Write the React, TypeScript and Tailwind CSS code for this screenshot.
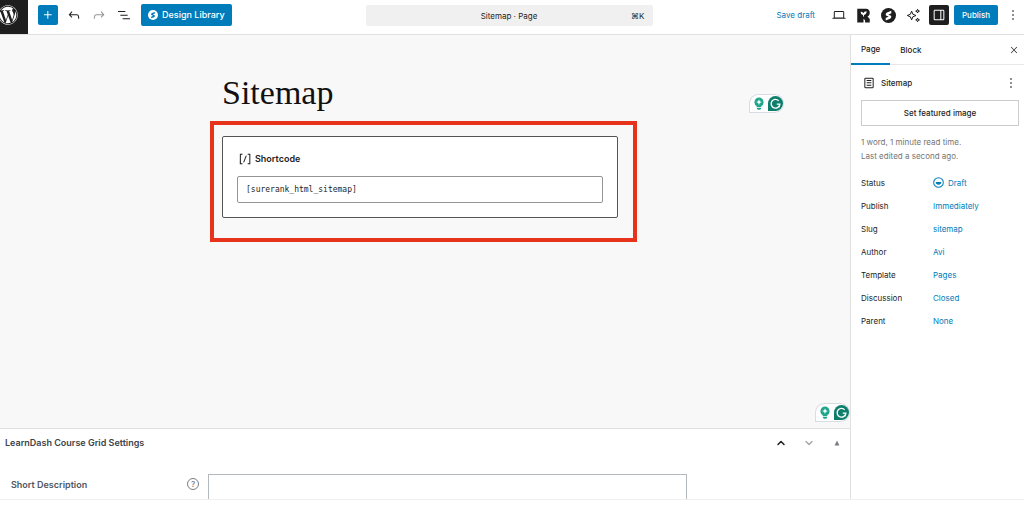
import React from "react";
import { FaWordpress } from "react-icons/fa";
import { ChevronDown, ChevronUp } from "lucide-react";

const paths = {
  plus: "M11 12.5V17.5H12.5V12.5H17.5V11H12.5V6H11V11H6V12.5H11Z",
  undo: "M18.3 11.7c-.6-.6-1.4-.9-2.3-.9H6.7l2.9-3.3-1.1-1-4.5 5L8.5 16l1-1-2.7-2.7H16c.5 0 .9.2 1.3.5 1 1 1 3.4 1 4.5v.3h1.5v-.2c0-1.5 0-4.3-1.5-5.7z",
  redo: "M15.6 6.5l-1.1 1 2.9 3.3H8c-.9 0-1.7.3-2.3.9-1.4 1.5-1.4 4.2-1.4 5.6v.2h1.5v-.3c0-1.1 0-3.5 1-4.5.3-.3.7-.5 1.3-.5h9.2L14.5 15l1.1 1.1 4.6-4.6-4.6-5z",
  list: "M3 6h11v1.5H3V6Zm3.5 5.5h11V13h-11v-1.5ZM21 17H10v1.5h11V17Z",
  laptop: "M20.5 16h-.7V8c0-1.1-.9-2-2-2H6.2c-1.1 0-2 .9-2 2v8h-.7c-.8 0-1.5.7-1.5 1.5h20c0-.8-.7-1.5-1.5-1.5zM5.7 8c0-.3.2-.5.5-.5h11.6c.3 0 .5.2.5.5v7.6H5.7V8z",
  drawer: "M18 4H6c-1.1 0-2 .9-2 2v12c0 1.1.9 2 2 2h12c1.1 0 2-.9 2-2V6c0-1.1-.9-2-2-2zm-4 14.5H6c-.3 0-.5-.2-.5-.5V6c0-.3.2-.5.5-.5h8v13zm4.5-.5c0 .3-.2.5-.5.5h-2.5v-13H18c.3 0 .5.2.5.5v12z",
  more: "M13 19h-2v-2h2v2zm0-6h-2v-2h2v2zm0-6h-2V5h2v2z",
  close: "m13.06 12 6.47-6.47-1.06-1.06L12 10.94 5.53 4.47 4.47 5.53 10.94 12l-6.47 6.47 1.06 1.06L12 13.06l6.47 6.47 1.06-1.06L13.06 12Z",
  page: "M15.5 7.5h-7V9h7V7.5Zm-7 3.5h7v1.5h-7V11Zm7 3.5h-7V16h7v-1.5Z M17 4H7a2 2 0 0 0-2 2v12a2 2 0 0 0 2 2h10a2 2 0 0 0 2-2V6a2 2 0 0 0-2-2ZM7 5.5h10a.5.5 0 0 1 .5.5v12a.5.5 0 0 1-.5.5H7a.5.5 0 0 1-.5-.5V6a.5.5 0 0 1 .5-.5Z",
  shortcode: "M16 4.2v1.5h2.5v12.5H16v1.5h4V4.2h-4zM4.2 19.8h4v-1.5H5.8V5.8h2.5V4.2h-4l-.1 15.6zm5.1-3.1l1.4.6 4-10-1.4-.6-4 10z",
};

function Icon({ name, className = "size-4" }: { name: keyof typeof paths; className?: string }) {
  return (
    <svg viewBox="0 0 24 24" fill="currentColor" fillRule="evenodd" aria-hidden="true" className={`shrink-0 ${className}`}>
      <path d={paths[name]} />
    </svg>
  );
}

function IconButton({ label, className = "", children }: { label: string; className?: string; children: React.ReactNode }) {
  return (
    <button type="button" aria-label={label} className={`flex shrink-0 items-center justify-center ${className}`}>
      {children}
    </button>
  );
}

function SpectraMark({ className, cut }: { className: string; cut: string }) {
  return (
    <svg viewBox="0 0 24 24" aria-hidden="true" className={className}>
      <circle cx="12" cy="12" r="12" fill="currentColor" />
      <path d="M16.5 4.5v3.8l-4.8 2.4 4.4 1.6c.9 2 0 4-1.7 4.9L7.5 20v-3.900l4.800-2.400-4.400-1.600c-.9-2 0-3.900 1.700-4.800z" fill={cut} />
    </svg>
  );
}

function RankMark() {
  return (
    <svg viewBox="0 0 24 24" aria-hidden="true" className="size-[15px]">
      <path d="M2 1h14c4 0 6 3 6 6.500 0 3-1.200 5-3.500 6.200L22 17.500V23h-7.500v-3.500L12 17v6H2v-9.500z" fill="currentColor" />
      <path d="M7.500 6c2.200 0 3.500.8 4.300 2.500.8-2.300 2.400-3.400 5.200-3.500 0 3.500-1.500 5.500-4.300 6v2.500h-1.500V11C8.800 10.700 7.500 9 7.500 6z" fill="#fff" />
    </svg>
  );
}

function Sparkles() {
  return (
    <svg viewBox="0 0 24 24" fill="none" stroke="currentColor" strokeWidth="1.600" strokeLinejoin="round" aria-hidden="true" className="size-[15px]">
      <path d="M9 5l2 5 5 2-5 2-2 5-2-5-5-2 5-2z" />
      <path d="M18.500 2l.8 2.200 2.200.8-2.200.8-.8 2.200-.8-2.200-2.200-.8 2.200-.8zM18.500 16l.8 2.200 2.200.8-2.200.8-.8 2.200-.8-2.200-2.200-.8 2.200-.8z" />
    </svg>
  );
}

function WritingAssistant({ className }: { className: string }) {
  return (
    <div className={`absolute flex h-[19px] items-center gap-[3px] rounded-full rounded-bl-sm border border-[#d8dce3] bg-white pl-[3px] ${className}`}>
      <button type="button" aria-label="Suggestions">
        <svg viewBox="0 0 24 28" aria-hidden="true" className="h-[13px] w-[12px]">
          <path d="M12 1a10 10 0 0 0-5 18.500V22h10v-2.500A10 10 0 0 0 12 1zM7.500 23.500h9V25a2.500 2.500 0 0 1-2.500 2.500h-4A2.500 2.500 0 0 1 7.500 25z" fill="#1ea58c" />
          <path d="M12 5l1.700 4.300L18 11l-4.300 1.700L12 17l-1.700-4.300L6 11l4.300-1.700z" fill="#fff" />
        </svg>
      </button>
      <button type="button" aria-label="Writing assistant">
        <svg viewBox="0 0 24 24" aria-hidden="true" className="size-[15px]">
          <path d="M12 0a12 12 0 1 1 0 24H0V12A12 12 0 0 1 12 0z" fill="#0d7d6c" />
          <path d="M17 7.500A7 7 0 1 0 19 13h-5M19 13l-1.500 5" fill="none" stroke="#fff" strokeWidth="2.200" />
        </svg>
      </button>
    </div>
  );
}

const details = [
  ["Status", "Draft"],
  ["Publish", "Immediately"],
  ["Slug", "sitemap"],
  ["Author", "Avi"],
  ["Template", "Pages"],
  ["Discussion", "Closed"],
  ["Parent", "None"],
];

function TopBar() {
  return (
    <header className="flex h-[35px] shrink-0 items-start justify-between border-b border-[#e0e0e0]">
      <div className="flex flex-1 items-start">
        <a href="#dashboard" aria-label="Dashboard" className="flex h-[34px] w-7 items-center overflow-hidden bg-[#1e1e1e] pb-1 text-white">
          <FaWordpress className="-ml-0.5 size-5 shrink-0" />
        </a>
        <div className="flex h-[30px] items-center pl-2.5">
          <IconButton label="Add block" className="size-5 rounded-xs bg-[#007cba] text-white">
            <Icon name="plus" />
          </IconButton>
          <IconButton label="Undo" className="ml-2 size-4"><Icon name="undo" /></IconButton>
          <IconButton label="Redo" className="ml-[9px] size-4 text-[#949494]"><Icon name="redo" /></IconButton>
          <IconButton label="Document overview" className="ml-[9px] size-4"><Icon name="list" /></IconButton>
          <button type="button" className="ml-[9px] flex h-[22px] items-center gap-1 rounded-xs bg-[#007cba] px-[7px] text-[9px] font-medium text-white">
            <SpectraMark className="size-2.5" cut="#007cba" />
            Design Library
          </button>
        </div>
      </div>
      <button type="button" className="mt-[5px] mr-1.5 grid h-[21px] w-[287px] grid-cols-[1fr_auto_1fr] items-center rounded-xs bg-[#f0f0f0] px-2">
        <span className="col-start-2">Sitemap · Page</span>
        <span className="text-right">⌘K</span>
      </button>
      <div className="flex h-[30px] flex-1 items-center justify-end">
        <button type="button" className="mr-4 text-[#007cba]">Save draft</button>
        <IconButton label="View" className="mr-[9px] size-4"><Icon name="laptop" /></IconButton>
        <IconButton label="SureRank" className="mr-[9px] size-4"><RankMark /></IconButton>
        <IconButton label="Spectra" className="mr-[9px] size-4"><SpectraMark className="size-[15px]" cut="#fff" /></IconButton>
        <IconButton label="Assistant" className="mr-[7px] size-4"><Sparkles /></IconButton>
        <IconButton label="Settings" className="mr-[5px] size-5 rounded-xs bg-[#1e1e1e] text-white"><Icon name="drawer" /></IconButton>
        <button type="button" className="h-5 rounded-xs bg-[#007cba] px-2 font-medium text-white">Publish</button>
        <IconButton label="Options" className="mr-[5px] ml-[9px] h-4 w-3"><Icon name="more" /></IconButton>
      </div>
    </header>
  );
}

function Canvas() {
  return (
    <section className="relative flex flex-1 justify-center bg-[#f8f8f8] pr-[3px]">
      <div className="w-[427px] max-w-full">
        <h1 className="mt-[38px] pl-3 font-['Liberation_Serif',serif] text-[34px] leading-10 text-[#111]">Sitemap</h1>
        <div className="mt-2 border-4 border-[#e8331c] pt-[11px] pr-[15px] pb-5 pl-2">
          <div className="rounded-xs border border-[#555] bg-white px-3.5 pt-3.5 pb-3.5">
            <label htmlFor="shortcode" className="flex h-4 items-center gap-0.5 text-[9px] font-semibold">
              <Icon name="shortcode" />
              Shortcode
            </label>
            <input id="shortcode" defaultValue="[surerank_html_sitemap]" className="mt-[9px] h-[27px] w-full rounded-xs border border-[#949494] bg-white px-2 font-['DejaVu_Sans_Mono',monospace] text-[8px]" />
          </div>
        </div>
      </div>
      <WritingAssistant className="top-[59px] right-[66px]" />
      <WritingAssistant className="right-0 bottom-1.5" />
    </section>
  );
}

function CourseSettings() {
  return (
    <section className="h-[71px] shrink-0 overflow-hidden border-t border-[#e0e0e0] text-[9px]">
      <div className="flex h-7 items-center justify-between pr-[7px] pl-[5px]">
        <h2 className="font-semibold text-[#3c434a]">LearnDash Course Grid Settings</h2>
        <div className="flex items-center gap-4">
          <IconButton label="Move up" className="size-3"><ChevronUp className="size-3" strokeWidth={3} /></IconButton>
          <IconButton label="Move down" className="size-3 text-[#a7aaad]"><ChevronDown className="size-3" strokeWidth={3} /></IconButton>
          <IconButton label="Toggle panel" className="size-3 text-[#787c82]">
            <svg viewBox="0 0 10 10" fill="currentColor" aria-hidden="true" className="size-[6px]"><path d="M5 1l4 8H1z" /></svg>
          </IconButton>
        </div>
      </div>
      <div className="flex items-start pt-[17px] pl-[11px]">
        <label htmlFor="description" className="flex h-[21px] w-[176px] items-center font-semibold text-[#50575e]">Short Description</label>
        <button type="button" aria-label="Help" className="mt-1 mr-[9px] flex size-3 shrink-0 items-center justify-center rounded-full border border-[#787c82] text-[8px] font-medium text-[#787c82]">?</button>
        <textarea id="description" className="h-16 w-[479px] resize-none border border-[#b4b9be]" />
      </div>
    </section>
  );
}

function Sidebar() {
  return (
    <aside className="w-[174px] shrink-0 border-l border-[#e0e0e0]">
      <div className="flex h-[30px] items-stretch border-b border-[#e8e8e8]">
        <button type="button" className="-mb-px border-b-2 border-[#007cba] px-2.5 font-medium">Page</button>
        <button type="button" className="px-2.5 font-medium">Block</button>
        <IconButton label="Close settings" className="mr-1 ml-auto w-3"><Icon name="close" className="size-2.5" /></IconButton>
      </div>
      <div className="pt-2.5 pr-[5px] pl-2.5">
        <div className="flex h-4 items-center">
          <Icon name="page" />
          <h2 className="ml-1 flex-1 font-medium">Sitemap</h2>
          <IconButton label="Actions" className="size-4"><Icon name="more" /></IconButton>
        </div>
        <button type="button" className="mt-[9px] h-[26px] w-full border border-[#ccc] font-medium">Set featured image</button>
        <p className="mt-[9px] leading-[14px] text-[#757575]">1 word, 1 minute read time.<br />Last edited a second ago.</p>
        <dl className="mt-2">
          {details.map(([name, value]) => (
            <div key={name} className="flex h-[23px] items-center">
              <dt className="w-[72px]">{name}</dt>
              <dd>
                <button type="button" className="flex items-center gap-1 text-[#007cba]">
                  {name === "Status" && (
                    <svg viewBox="0 0 24 24" aria-hidden="true" className="size-[11px]">
                      <circle cx="12" cy="12" r="10.500" fill="none" stroke="currentColor" strokeWidth="2.200" />
                      <path d="M6 11h12a6 6 0 0 1-12 0z" fill="currentColor" />
                    </svg>
                  )}
                  {value}
                </button>
              </dd>
            </div>
          ))}
        </dl>
      </div>
    </aside>
  );
}

export default function App() {
  return (
    <div className="flex min-h-screen flex-col bg-white pb-[5px] font-['Inter',sans-serif] text-[8px] text-[#1e1e1e]">
      <TopBar />
      <div className="flex flex-1 border-b border-[#f0f0f0]">
        <main className="flex min-w-0 flex-1 flex-col">
          <Canvas />
          <CourseSettings />
        </main>
        <Sidebar />
      </div>
    </div>
  );
}
